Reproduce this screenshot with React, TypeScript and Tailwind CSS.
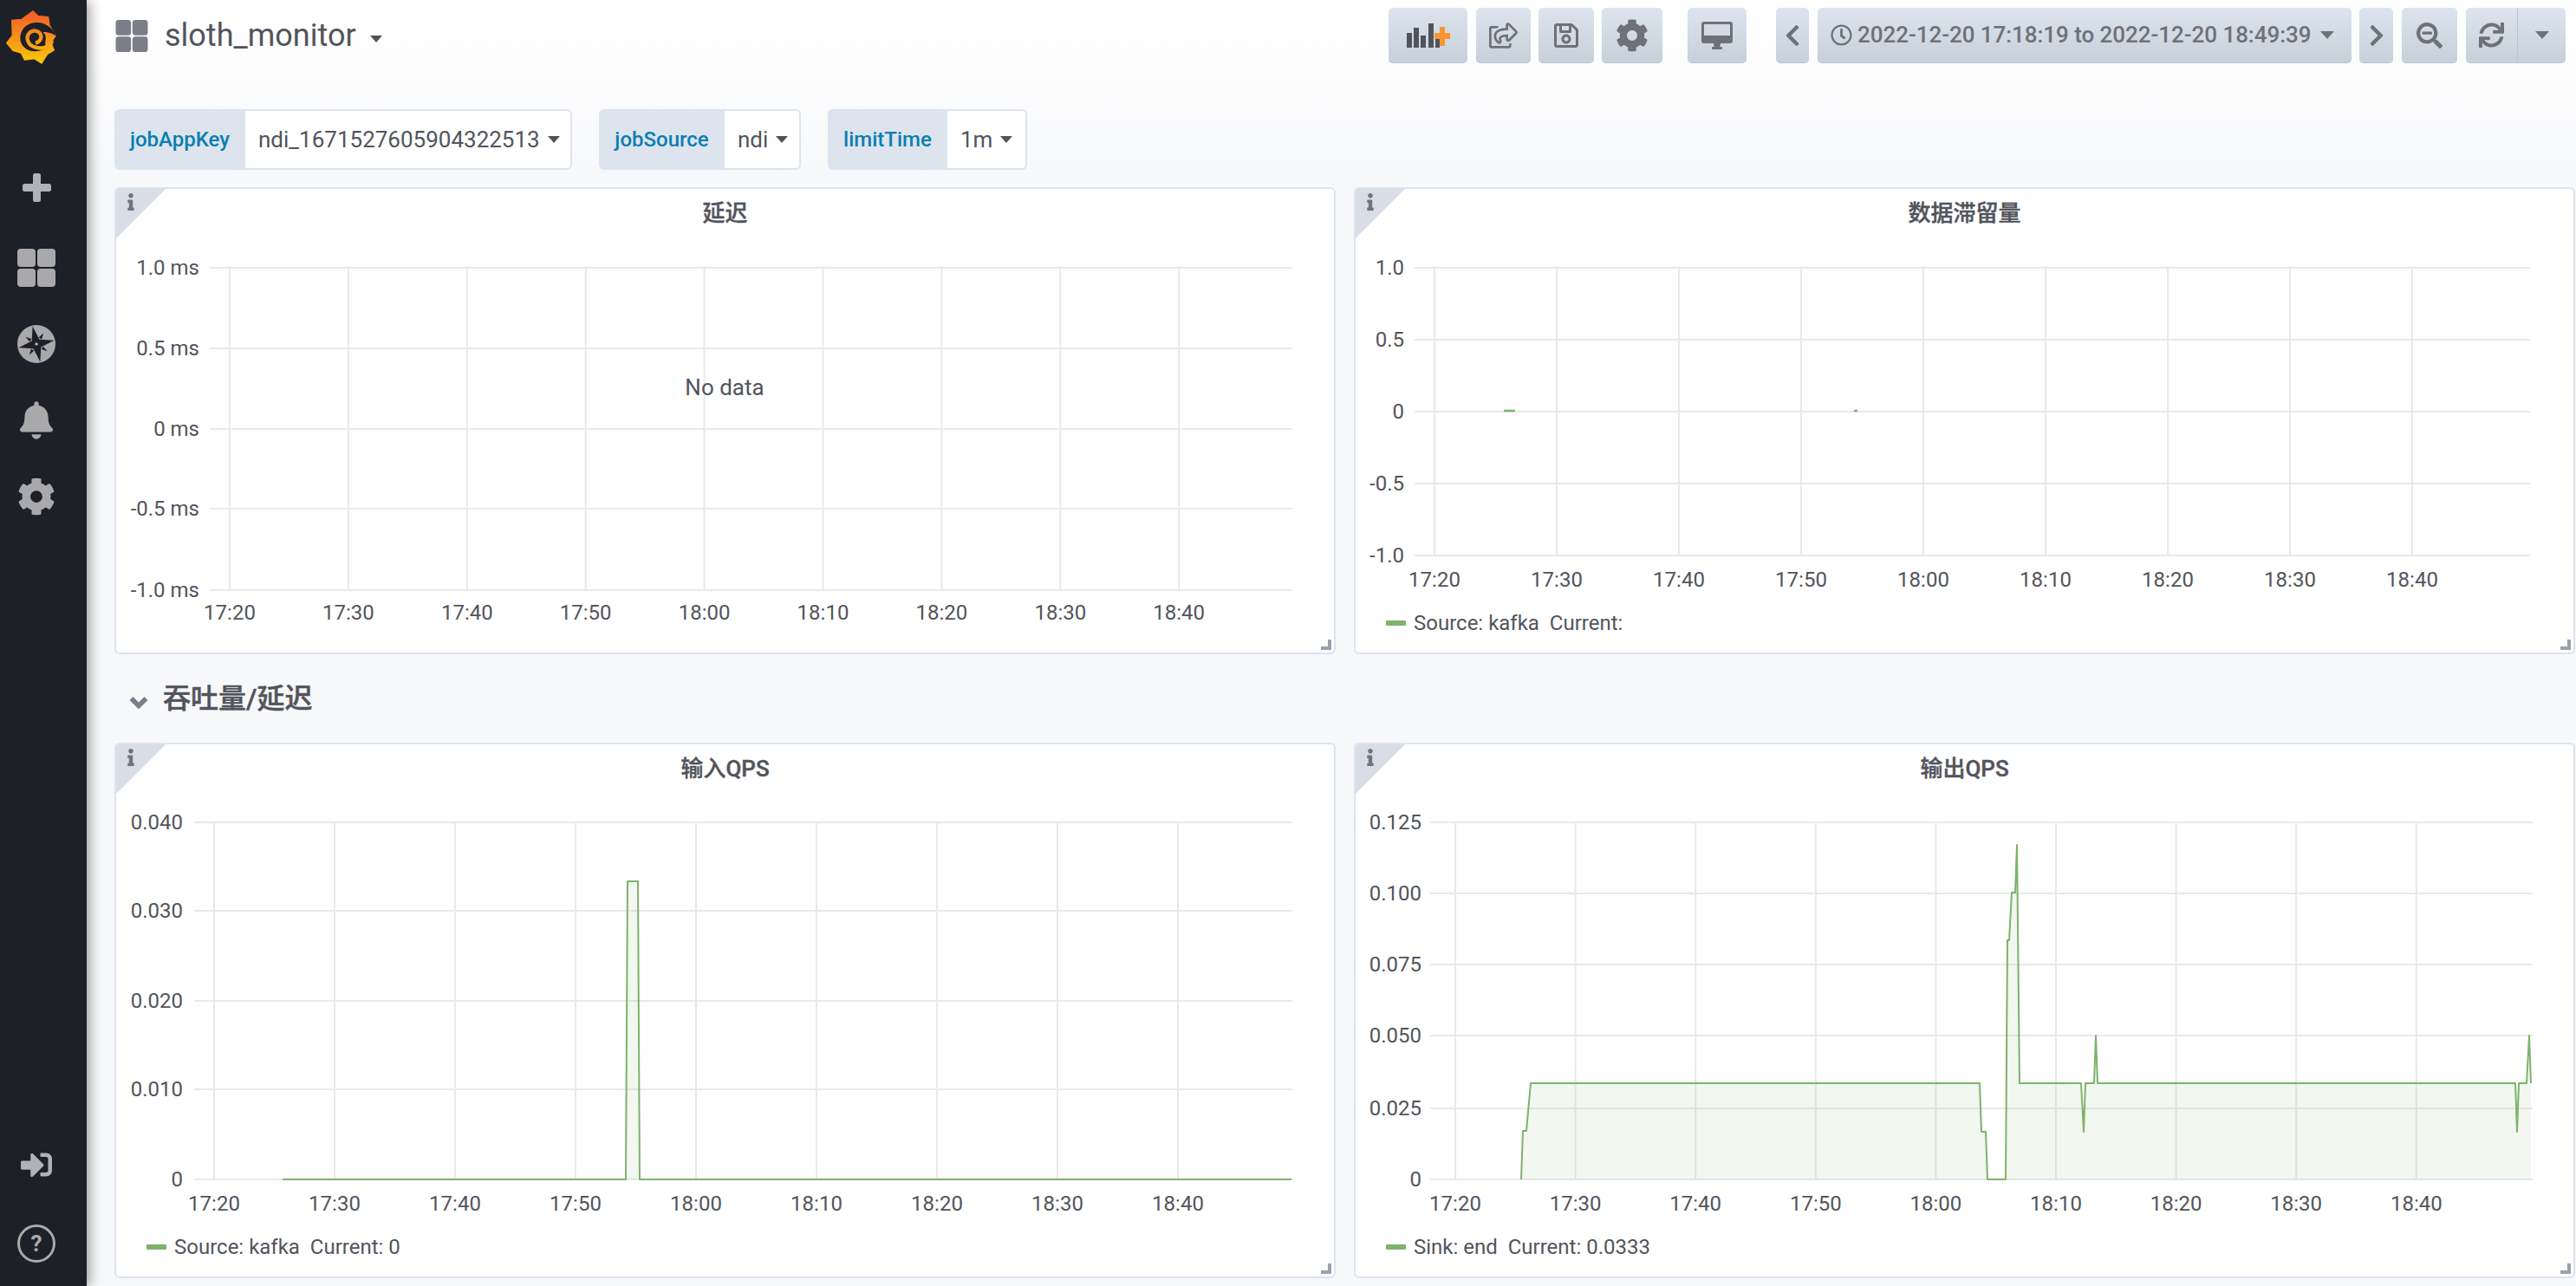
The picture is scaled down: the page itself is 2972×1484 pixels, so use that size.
import type { ReactNode } from "react";
import {
  FaBell,
  FaChevronLeft,
  FaChevronRight,
  FaCog,
  FaInfo,
  FaRegClock,
  FaRegSave,
  FaRegShareSquare,
  FaSearchMinus,
  FaSignInAlt,
  FaSync,
} from "react-icons/fa";

const TIMES = ["17:20", "17:30", "17:40", "17:50", "18:00", "18:10", "18:20", "18:30", "18:40"];

function GridIcon({ className }: { className: string }) {
  return (
    <svg aria-hidden="true" className={className} viewBox="0 0 44 44" fill="currentColor">
      <rect x="0" y="0" width="21" height="21" rx="4" />
      <rect x="23" y="0" width="21" height="21" rx="4" />
      <rect x="0" y="23" width="21" height="21" rx="4" />
      <rect x="23" y="23" width="21" height="21" rx="4" />
    </svg>
  );
}

function Caret({ className }: { className: string }) {
  return (
    <svg aria-hidden="true" className={className} viewBox="0 0 16 9" fill="currentColor">
      <polygon points="0,0 16,0 8,9" />
    </svg>
  );
}

function GrafanaLogo() {
  return (
    <svg aria-hidden="true" className="h-[62px] w-[58px]" viewBox="22 37 174 186">
      <defs>
        <linearGradient id="logoFill" gradientUnits="userSpaceOnUse" x1="0" y1="37" x2="0" y2="222">
          <stop offset="0" stopColor="#f05a28" />
          <stop offset="1" stopColor="#fbca0a" />
        </linearGradient>
      </defs>
      <polygon
        fill="url(#logoFill)"
        stroke="url(#logoFill)"
        strokeWidth="4"
        strokeLinejoin="round"
        points="115,39 132,56 168,60 172,88 193,125 178,148 188,175 165,188 145,220 120,204 86,208 74,184 46,176 24,150 44,124 42,71 76,68"
      />
      <path
        fill="#1e2028"
        d="M194 125 C184 94 150 74 118 80 C88 84 70 108 71 136 C73 162 96 180 124 179 C142 178 154 172 162 164 C150 150 170 130 150 112 C170 112 186 118 194 125 Z"
      />
      <path
        d="M182 142 C172 168 142 172 118 163 C96 155 90 130 102 116 C114 103 134 106 141 119 C147 132 139 147 124 150"
        fill="none"
        stroke="url(#logoFill)"
        strokeWidth="13"
      />
    </svg>
  );
}

function CompassIcon() {
  return (
    <svg aria-hidden="true" className="h-[44px] w-[44px]" viewBox="-22 -22 44 44">
      <circle r="22" fill="#a9a9ac" />
      <g transform="rotate(-12)">
        <polygon
          fill="#1e2028"
          points="0,-21 4.5,-4.5 21,0 4.5,4.5 0,21 -4.5,4.5 -21,0 -4.5,-4.5"
        />
        <g transform="rotate(45)" fill="#1e2028">
          <polygon points="-2,-8 0,-15 2,-8" />
          <polygon points="-2,8 0,15 2,8" />
          <polygon points="-8,-2 -15,0 -8,2" />
          <polygon points="8,-2 15,0 8,2" />
        </g>
      </g>
      <circle r="1.8" fill="#a9a9ac" />
    </svg>
  );
}

function PlusIcon() {
  return (
    <svg aria-hidden="true" className="h-[33px] w-[33px]" viewBox="0 0 33 33" fill="#b0b2b7">
      <rect x="12" y="0" width="9" height="33" rx="2.5" />
      <rect x="0" y="12" width="33" height="9" rx="2.5" />
    </svg>
  );
}

function GraphAddIcon() {
  return (
    <svg aria-hidden="true" className="h-[28px] w-[50px]" viewBox="0 0 50 28">
      <g fill="#52545c">
        <rect x="0" y="11" width="6" height="17" />
        <rect x="8" y="5" width="6" height="23" />
        <rect x="16" y="14" width="6" height="14" />
        <rect x="25" y="0" width="6" height="28" />
        <rect x="33" y="18" width="5" height="10" />
      </g>
      <g fill="#f9952f">
        <rect x="38" y="4" width="6" height="22" />
        <rect x="32" y="11" width="18" height="7" />
      </g>
    </svg>
  );
}

function MonitorIcon() {
  return (
    <svg aria-hidden="true" className="h-[32px] w-[36px] text-[#6f7179]" viewBox="0 0 36 32" fill="currentColor">
      <rect x="0" y="0" width="36" height="25" rx="3" />
      <rect x="3" y="3" width="30" height="13" fill="#d3dae3" />
      <polygon points="14,25 22,25 21,30 15,30" />
      <rect x="12" y="29" width="12" height="3" rx="1" />
    </svg>
  );
}

function ToolButton({ className, children }: { className: string; children: ReactNode }) {
  return (
    <div
      className={`flex h-[64px] items-center justify-center rounded-[5px] border-b border-[#bcc5cf] bg-[linear-gradient(180deg,#dde4ed,#c7d0d9)] text-[#6f7179] ${className}`}
    >
      {children}
    </div>
  );
}

function VarGroup({ label, value, labelW, valueW }: { label: string; value: string; labelW: string; valueW: string }) {
  return (
    <div className="flex h-[70px]">
      <div
        className={`flex items-center justify-center rounded-l-[6px] bg-[#dde4ed] text-[24px] font-medium text-[#0a7fb1] ${labelW}`}
      >
        {label}
      </div>
      <div
        className={`flex items-center gap-[9px] rounded-r-[6px] border-2 border-l-0 border-[#dde4ed] bg-white pl-[15px] text-[26px] text-[#52545c] ${valueW}`}
      >
        {value}
        <Caret className="h-[8px] w-[14px] text-[#52545c]" />
      </div>
    </div>
  );
}

interface YTick {
  y: number;
  label: string;
}

interface ChartProps {
  originX: number;
  originY: number;
  height: number;
  startX: number;
  endX: number;
  labelX: number;
  firstTick: number;
  tickStep: number;
  timeY: number;
  ticks: YTick[];
  children?: ReactNode;
}

// viewBox starts at the panel's content corner so everything below is in page pixels
function Chart({ originX, originY, height, startX, endX, labelX, firstTick, tickStep, timeY, ticks, children }: ChartProps) {
  const top = ticks[0].y;
  const bottom = ticks[ticks.length - 1].y;
  return (
    <svg
      aria-hidden="true"
      className="block w-[1405px] shrink-0"
      style={{ height }}
      viewBox={`${originX} ${originY} 1405 ${height}`}
    >
      <g stroke="#e9e9e9" strokeWidth="2">
        {ticks.map((t) => (
          <line key={t.label} x1={startX} x2={endX} y1={t.y} y2={t.y} />
        ))}
        {TIMES.map((t, i) => (
          <line key={t} x1={firstTick + i * tickStep} x2={firstTick + i * tickStep} y1={top} y2={bottom} />
        ))}
      </g>
      {children}
      <g className="fill-[#52545c] text-[24px]">
        {ticks.map((t) => (
          <text key={t.label} x={labelX} y={t.y} textAnchor="end" dominantBaseline="central">
            {t.label}
          </text>
        ))}
        {TIMES.map((t, i) => (
          <text key={t} x={firstTick + i * tickStep} y={timeY} textAnchor="middle" dominantBaseline="central">
            {t}
          </text>
        ))}
      </g>
    </svg>
  );
}

function Series({ points, baseline }: { points: [number, number][]; baseline: number }) {
  const line = points.map((p) => p.join(",")).join(" ");
  const first = points[0][0];
  const last = points[points.length - 1][0];
  return (
    <>
      <polygon points={`${first},${baseline} ${line} ${last},${baseline}`} fill="#7eb26d" fillOpacity="0.1" />
      <polyline points={line} fill="none" stroke="#7eb26d" strokeWidth="2" strokeLinejoin="round" />
    </>
  );
}

function Legend({ text, heightClass }: { text: string; heightClass: string }) {
  return (
    <div className={`flex items-center gap-[9px] pl-[35px] text-[24px] whitespace-pre text-[#52545c] ${heightClass}`}>
      <span className="h-[6px] w-[23px] rounded-[1px] bg-[#7eb26d]" />
      {text}
    </div>
  );
}

function Panel({ title, heightClass, children }: { title: string; heightClass: string; children: ReactNode }) {
  return (
    <div className={`relative w-[1409px] overflow-hidden rounded-[6px] border-2 border-[#dde4ed] bg-white ${heightClass}`}>
      <div className="absolute top-0 left-0 h-[57px] w-[57px] bg-[#d8dde6] [clip-path:polygon(0_0,100%_0,0_100%)]" />
      <FaInfo className="absolute top-[5px] left-[11px] h-[20px] w-[12px] text-[#6e7480]" />
      <div className="flex h-[56px] items-center justify-center text-[26px] font-medium text-[#52545c] [-webkit-text-stroke:0.4px_#52545c]">
        {title}
      </div>
      {children}
      <svg aria-hidden="true" className="absolute right-[3px] bottom-[3px] h-[12px] w-[12px]" viewBox="0 0 12 12">
        <path d="M8 0h4v12H0V8h8z" fill="#9aa0a8" />
      </svg>
    </div>
  );
}

export default function App() {
  return (
    <div className="flex h-[1484px] w-[2972px] overflow-hidden bg-[#f7f8fa] font-['Roboto','Noto_Sans_CJK_SC',sans-serif]">
      <aside className="relative z-10 flex h-full w-[100px] shrink-0 flex-col items-center bg-[#1e2028] pr-[16px] text-[#a9a9ac] shadow-[3px_0_14px_rgba(0,0,0,0.4)]">
        <div className="flex h-[172px] w-full items-start pt-[12px] pl-[7px]">
          <GrafanaLogo />
        </div>
        <div className="flex h-[93px] items-start pt-[28px]">
          <PlusIcon />
        </div>
        <div className="flex h-[88px] items-center">
          <GridIcon className="h-[44px] w-[44px]" />
        </div>
        <div className="flex h-[88px] items-center">
          <CompassIcon />
        </div>
        <div className="flex h-[88px] items-center">
          <FaBell className="h-[44px] w-[38px]" />
        </div>
        <div className="flex h-[88px] items-center">
          <FaCog className="h-[44px] w-[44px]" />
        </div>
        <div className="mt-auto flex h-[88px] items-center">
          <FaSignInAlt className="h-[36px] w-[36px] text-[#b0b2b7]" />
        </div>
        <div className="mb-[2px] flex h-[94px] items-center">
          <div className="flex h-[44px] w-[44px] items-center justify-center rounded-full border-[3px] border-[#a9a9ac] text-[26px] font-bold">
            ?
          </div>
        </div>
      </aside>

      <main className="flex min-w-0 flex-1 flex-col bg-[linear-gradient(180deg,#ffffff_0px,#f7f8fa_210px)] pl-[32px]">
        <header className="flex h-[126px] items-start justify-between pt-[9px] pr-[12px]">
          <div className="flex h-[64px] items-center text-[#52545c]">
            <GridIcon className="ml-[1px] h-[37px] w-[38px] text-[#7b7e87]" />
            <span className="ml-[19px] text-[36px]">sloth_monitor</span>
            <Caret className="mt-[8px] ml-[16px] h-[8px] w-[14px]" />
          </div>
          <div className="flex items-start">
            <ToolButton className="w-[91px]">
              <GraphAddIcon />
            </ToolButton>
            <ToolButton className="ml-[10px] w-[63px]">
              <FaRegShareSquare className="h-[30px] w-[33px]" />
            </ToolButton>
            <ToolButton className="ml-[9px] w-[64px]">
              <FaRegSave className="h-[32px] w-[30px]" />
            </ToolButton>
            <ToolButton className="ml-[9px] w-[70px]">
              <FaCog className="h-[38px] w-[38px]" />
            </ToolButton>
            <ToolButton className="ml-[29px] w-[68px]">
              <MonitorIcon />
            </ToolButton>
            <ToolButton className="ml-[34px] w-[38px]">
              <FaChevronLeft className="h-[28px] w-[20px]" />
            </ToolButton>
            <ToolButton className="ml-[10px] w-[616px] justify-start gap-[6px] pl-[15px] text-[26px] font-medium">
              <FaRegClock className="h-[25px] w-[25px]" />
              <span className="tracking-[-0.05px]">2022-12-20 17:18:19 to 2022-12-20 18:49:39</span>
              <Caret className="ml-[5px] h-[9px] w-[16px]" />
            </ToolButton>
            <ToolButton className="ml-[9px] w-[39px]">
              <FaChevronRight className="h-[28px] w-[20px]" />
            </ToolButton>
            <ToolButton className="ml-[10px] w-[64px]">
              <FaSearchMinus className="h-[30px] w-[30px]" />
            </ToolButton>
            <ToolButton className="ml-[10px] w-[115px]">
              <div className="flex h-full w-[60px] items-center justify-center border-r border-[#bcc5cf]">
                <FaSync className="h-[29px] w-[29px]" />
              </div>
              <div className="flex h-full w-[55px] items-center justify-center">
                <Caret className="h-[9px] w-[16px]" />
              </div>
            </ToolButton>
          </div>
        </header>

        <div className="flex h-[90px] items-start">
          <VarGroup label="jobAppKey" value="ndi_1671527605904322513" labelW="w-[151px]" valueW="w-[377px]" />
          <div className="ml-[31px]">
            <VarGroup label="jobSource" value="ndi" labelW="w-[145px]" valueW="w-[88px]" />
          </div>
          <div className="ml-[31px]">
            <VarGroup label="limitTime" value="1m" labelW="w-[138px]" valueW="w-[92px]" />
          </div>
        </div>

        <div className="flex gap-[21px]">
          <Panel title="延迟" heightClass="h-[539px]">
            <Chart
              originX={134}
              originY={274}
              height={479}
              startX={242}
              endX={1491}
              labelX={230}
              firstTick={265}
              tickStep={136.9}
              timeY={707}
              ticks={[
                { y: 309, label: "1.0 ms" },
                { y: 402, label: "0.5 ms" },
                { y: 495, label: "0 ms" },
                { y: 587, label: "-0.5 ms" },
                { y: 681, label: "-1.0 ms" },
              ]}
            >
              <text x="836" y="447" textAnchor="middle" dominantBaseline="central" className="fill-[#52545c] text-[26px]">
                No data
              </text>
            </Chart>
          </Panel>
          <Panel title="数据滞留量" heightClass="h-[539px]">
            <Chart
              originX={1564}
              originY={274}
              height={426}
              startX={1632}
              endX={2919}
              labelX={1620}
              firstTick={1655}
              tickStep={141}
              timeY={669}
              ticks={[
                { y: 309, label: "1.0" },
                { y: 392, label: "0.5" },
                { y: 475, label: "0" },
                { y: 558, label: "-0.5" },
                { y: 641, label: "-1.0" },
              ]}
            >
              <g stroke="#7eb26d" strokeWidth="2.5">
                <line x1="1735" x2="1748" y1="474" y2="474" />
                <line x1="2139" x2="2143" y1="474" y2="474" />
              </g>
            </Chart>
            <Legend text="Source: kafka  Current:" heightClass="h-[38px]" />
          </Panel>
        </div>

        <div className="flex h-[102px] items-center gap-[17px] pl-[17px] text-[32px] font-medium text-[#52545c] [-webkit-text-stroke:0.5px_#52545c]">
          <svg aria-hidden="true" className="mt-[8px] h-[15px] w-[22px] text-[#7b7e87]" viewBox="0 0 22 15">
            <path d="M2.5 3 L11 11.5 L19.5 3" fill="none" stroke="currentColor" strokeWidth="5.5" />
          </svg>
          <span>吞吐量/延迟</span>
        </div>

        <div className="flex gap-[21px]">
          <Panel title="输入QPS" heightClass="h-[618px]">
            <Chart
              originX={134}
              originY={915}
              height={500}
              startX={224}
              endX={1491}
              labelX={211}
              firstTick={247}
              tickStep={139}
              timeY={1389}
              ticks={[
                { y: 949, label: "0.040" },
                { y: 1051, label: "0.030" },
                { y: 1155, label: "0.020" },
                { y: 1257, label: "0.010" },
                { y: 1361, label: "0" },
              ]}
            >
              <Series
                baseline={1361}
                points={[
                  [326, 1361],
                  [722, 1361],
                  [724, 1017],
                  [736, 1017],
                  [738, 1361],
                  [1490, 1361],
                ]}
              />
            </Chart>
            <Legend text="Source: kafka  Current: 0" heightClass="h-[48px]" />
          </Panel>
          <Panel title="输出QPS" heightClass="h-[618px]">
            <Chart
              originX={1564}
              originY={915}
              height={500}
              startX={1650}
              endX={2922}
              labelX={1640}
              firstTick={1679}
              tickStep={138.6}
              timeY={1389}
              ticks={[
                { y: 949, label: "0.125" },
                { y: 1031, label: "0.100" },
                { y: 1113, label: "0.075" },
                { y: 1195, label: "0.050" },
                { y: 1279, label: "0.025" },
                { y: 1361, label: "0" },
              ]}
            >
              <Series
                baseline={1361}
                points={[
                  [1755, 1361],
                  [1757, 1305],
                  [1761, 1305],
                  [1766, 1250],
                  [2284, 1250],
                  [2286, 1306],
                  [2291, 1306],
                  [2293, 1361],
                  [2314, 1361],
                  [2316, 1085],
                  [2318, 1085],
                  [2321, 1030],
                  [2325, 1030],
                  [2327, 975],
                  [2330, 1250],
                  [2401, 1250],
                  [2404, 1306],
                  [2406, 1250],
                  [2416, 1250],
                  [2418, 1195],
                  [2420, 1250],
                  [2902, 1250],
                  [2904, 1306],
                  [2906, 1250],
                  [2915, 1250],
                  [2918, 1195],
                  [2920, 1250],
                ]}
              />
            </Chart>
            <Legend text="Sink: end  Current: 0.0333" heightClass="h-[48px]" />
          </Panel>
        </div>
      </main>
    </div>
  );
}
